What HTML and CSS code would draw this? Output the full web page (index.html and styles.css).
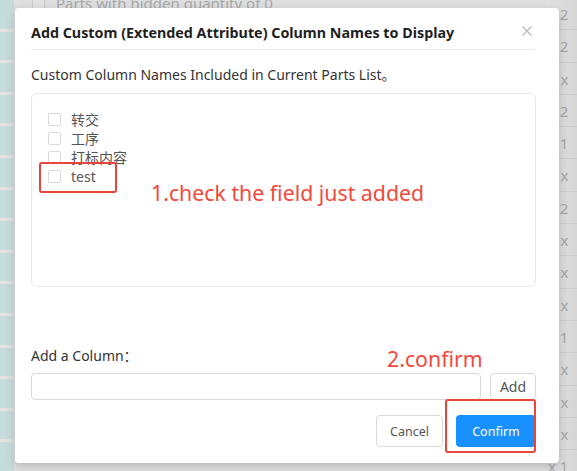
FILE: index.html
```html
<!DOCTYPE html>
<html>
<head>
<meta charset="utf-8">
<link rel="stylesheet" href="styles.css">
</head>
<body>
<div class="page">
  <div class="backdrop">
    <div class="strip-left">
      <div class="tile"></div><div class="tile"></div><div class="tile"></div><div class="tile"></div>
      <div class="tile"></div><div class="tile"></div><div class="tile"></div><div class="tile"></div>
      <div class="tile"></div><div class="tile"></div><div class="tile"></div><div class="tile"></div>
      <div class="tile"></div><div class="tile"></div><div class="tile"></div>
    </div>
    <div class="strip-mid">
      <div class="top-row"><span class="bg-check"></span><span class="bg-text">Parts with hidden quantity of 0</span></div>
    </div>
    <div class="strip-right">
      <div class="qty">x 2</div><div class="qty">x 2</div><div class="qty">2 x</div><div class="qty">x 2</div>
      <div class="qty">x 1</div><div class="qty">7 x</div><div class="qty">x 2</div><div class="qty">0 x</div>
      <div class="qty">2 x</div><div class="qty">2 x</div><div class="qty">x 1</div><div class="qty">3 x</div>
      <div class="qty">2 x</div><div class="qty">5 x</div><div class="qty">x 1</div>
    </div>
  </div>

  <div class="modal">
    <div class="modal-header">
      <div class="modal-title">Add Custom (Extended Attribute) Column Names to Display</div>
      <span class="close">
        <svg width="10" height="10" viewBox="0 0 10 10"><path d="M0.5 0.5 L9.5 9.5 M9.5 0.5 L0.5 9.5" stroke="#b5b5b5" stroke-width="1.1" fill="none"/></svg>
      </span>
    </div>
    <div class="modal-body">
      <div class="intro">Custom Column Names Included in Current Parts List。</div>
      <div class="list-box">
        <label class="item"><span class="cb"></span><span class="lbl">转交</span></label>
        <label class="item"><span class="cb"></span><span class="lbl">工序</span></label>
        <label class="item"><span class="cb"></span><span class="lbl">打标内容</span></label>
        <label class="item"><span class="cb"></span><span class="lbl">test</span></label>
      </div>
      <div class="add-label">Add a Column：</div>
      <div class="add-row">
        <div class="input"></div>
        <div class="btn add-btn">Add</div>
      </div>
    </div>
    <div class="modal-footer">
      <div class="btn cancel">Cancel</div>
      <div class="btn confirm">Confirm</div>
    </div>
  </div>

  <div class="mark mark1"></div>
  <div class="note note1">1.check the field just added</div>
  <div class="note note2">2.confirm</div>
  <div class="mark mark2"></div>
</div>
</body>
</html>
```

FILE: styles.css
```css
* { box-sizing: border-box; }
html, body { margin: 0; padding: 0; }
body {
  width: 577px;
  height: 471px;
  overflow: hidden;
  font-family: "Noto Sans", "Noto Sans CJK SC", sans-serif;
  background: #d9d9d9;
}
.page {
  position: relative;
  width: 577px;
  height: 471px;
}
.backdrop {
  display: grid;
  grid-template-columns: 15px 1fr 30px;
  height: 471px;
}
.strip-left {
  background: #e2e2e2;
  display: flex;
  flex-direction: column;
  gap: 3px;
}
.tile {
  height: 28.6px;
  background: #c6dcdc;
  margin-right: 1px;
}
.strip-mid {
  background: #dedede;
}
.top-row {
  display: flex;
  align-items: center;
  gap: 11px;
  margin-top: -8px;
  padding-left: 17px;
  height: 22px;
}
.bg-check {
  width: 13px;
  height: 22px;
  border: 1px solid #c9c9c9;
  background: #e2e2e2;
}
.bg-text {
  color: #a9a9a9;
  font-size: 15px;
}
.strip-right {
  background: linear-gradient(to right, #e0e0e0, #d6d6d6);
  display: flex;
  flex-direction: column;
  margin-top: -2px;
}
.qty {
  height: 32.3px;
  flex: none;
  border-bottom: 1px solid #cdcdcd;
  color: #a6a6a6;
  font-size: 15px;
  line-height: 32px;
  padding-left: 1px;
  white-space: nowrap;
}

.modal {
  position: absolute;
  left: 15px;
  top: 8px;
  width: 544px;
  height: 455px;
  background: #fff;
  border-radius: 4px;
  box-shadow: 0 3px 10px rgba(0, 0, 0, 0.18);
  display: flex;
  flex-direction: column;
}
.modal-header {
  margin: 0 24px 0 16px;
  height: 42px;
  border-bottom: 1px solid #e8e8e8;
  display: flex;
  align-items: center;
  justify-content: space-between;
  padding-top: 8px;
}
.modal-title {
  font-weight: 700;
  font-size: 14.3px;
  color: #1f1f1f;
}
.close {
  display: flex;
  margin-right: 3px;
  margin-top: -4px;
}
.modal-body {
  padding: 0 23px 0 16px;
}
.intro {
  margin-top: 15px;
  height: 20px;
  line-height: 20px;
  font-size: 14px;
  color: #333;
}
.list-box {
  margin-top: 8px;
  height: 194px;
  border: 1px solid #e8e8e8;
  border-radius: 6px;
  padding: 16px 0 0 16px;
  display: flex;
  flex-direction: column;
}
.item {
  display: flex;
  align-items: center;
  height: 19px;
  gap: 10px;
}
.cb {
  width: 13px;
  height: 13px;
  border: 1px solid #d9d9d9;
  border-radius: 2px;
  background: #fff;
}
.lbl {
  font-size: 14px;
  line-height: 19px;
  color: #555;
}
.add-label {
  margin-top: 59px;
  height: 20px;
  line-height: 20px;
  font-size: 14px;
  color: #333;
}
.add-row {
  margin-top: 7px;
  display: flex;
  gap: 9px;
}
.input {
  flex: 1;
  height: 27px;
  border: 1px solid #d9d9d9;
  border-radius: 4px;
}
.btn {
  display: flex;
  align-items: center;
  justify-content: center;
  border-radius: 4px;
  font-size: 13px;
}
.add-btn {
  width: 46px;
  height: 27px;
  border: 1px solid #d9d9d9;
  color: #555;
  font-size: 14px;
}
.modal-footer {
  display: flex;
  justify-content: flex-end;
  gap: 13px;
  padding: 15px 23px 0 0;
}
.cancel {
  width: 67px;
  height: 32px;
  border: 1px solid #d9d9d9;
  color: #555;
  font-size: 12.5px;
}
.confirm {
  width: 80px;
  height: 32px;
  background: #1890ff;
  color: #fff;
  font-size: 12.5px;
}

.mark {
  position: absolute;
  border: 2px solid #e8453c;
  border-radius: 3px;
}
.mark1 { left: 39px; top: 162px; width: 78px; height: 31px; }
.mark2 { left: 445px; top: 399px; width: 91px; height: 54px; }
.note {
  position: absolute;
  color: #f2493b;
  font-size: 21.3px;
  line-height: 24px;
  white-space: nowrap;
}
.note1 { left: 151px; top: 181px; }
.note2 { left: 387px; top: 347px; }
```
